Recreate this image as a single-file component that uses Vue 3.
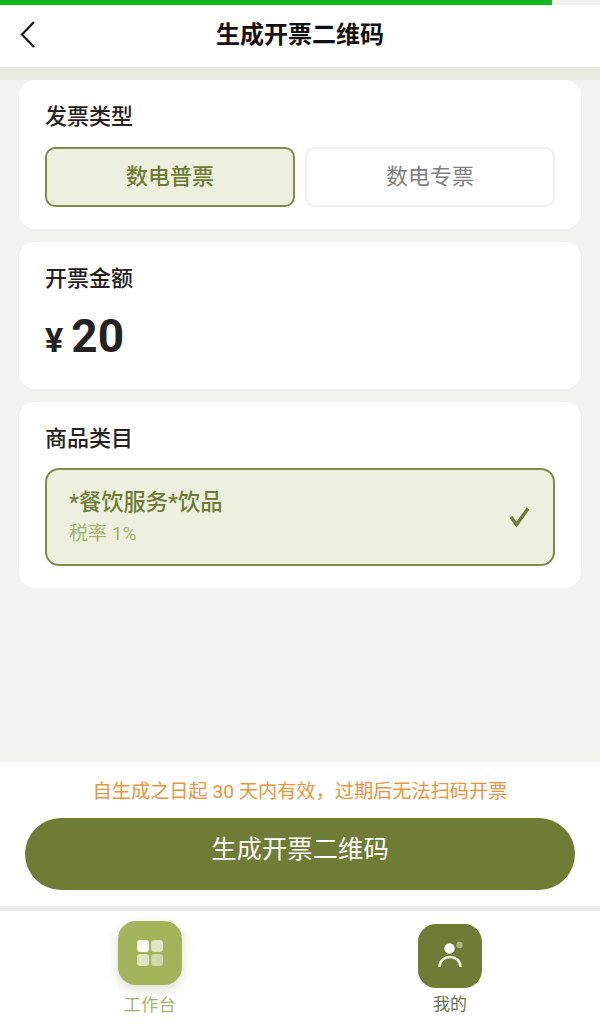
<script setup>
import { ref } from 'vue'

const tipi = ['数电普票', '数电专票']
const tipoScelto = ref('数电普票')
</script>

<template>
  <div class="pagina">
    <div class="progresso"></div>
    <header class="testata">
      <svg class="indietro" width="18" height="30" viewBox="0 0 18 30">
        <path d="M15 2 L3 14.5 L15 27" fill="none" stroke="#1a1a1a" stroke-width="2.2" />
      </svg>
      <h1>生成开票二维码</h1>
    </header>
    <div class="striscia"></div>

    <main class="contenuto">
      <section class="card card-tipo">
        <h2>发票类型</h2>
        <div class="tipi">
          <button
            v-for="tipo in tipi"
            :key="tipo"
            type="button"
            class="tipo"
            :class="{ attivo: tipo === tipoScelto }"
            @click="tipoScelto = tipo"
          >{{ tipo }}</button>
        </div>
      </section>

      <section class="card card-importo">
        <h2>开票金额</h2>
        <div class="importo"><span class="valuta">¥</span><span class="cifra">20</span></div>
      </section>

      <section class="card card-categoria">
        <h2>商品类目</h2>
        <div class="categoria">
          <div>
            <div class="categoria-nome">*餐饮服务*饮品</div>
            <div class="categoria-aliquota">税率 1%</div>
          </div>
          <svg width="22" height="22" viewBox="0 0 22 22">
            <path d="M3 11 L8.5 18.5 L20 2.5" fill="none" stroke="#6e7c35" stroke-width="3.4" />
          </svg>
        </div>
      </section>
    </main>

    <footer class="piede">
      <p class="avviso">自生成之日起 30 天内有效，过期后无法扫码开票</p>
      <button type="button" class="genera">生成开票二维码</button>
    </footer>
    <div class="striscia-bassa"></div>

    <nav class="schede">
      <div class="scheda">
        <div class="icona icona-lavoro">
          <svg width="28" height="28" viewBox="0 0 26 26">
            <rect x="1" y="1" width="11" height="11" rx="3" fill="#ffffff" />
            <rect x="14" y="1" width="11" height="11" rx="3" fill="#dfe6c8" />
            <rect x="1" y="14" width="11" height="11" rx="3" fill="#dfe6c8" />
            <rect x="14" y="14" width="11" height="11" rx="3" fill="#cdd8ab" />
          </svg>
        </div>
        <span class="etichetta etichetta-lavoro">工作台</span>
      </div>
      <div class="scheda scheda-mio">
        <div class="icona icona-mio">
          <svg width="30" height="30" viewBox="0 0 30 30">
            <circle cx="14.5" cy="7.5" r="5.2" fill="#ffffff" />
            <circle cx="24.5" cy="4" r="3.2" fill="#a9b77d" />
            <path d="M4.5 26 C4.5 12.7 25.5 12.7 25.5 26" fill="none" stroke="#eef1e0" stroke-width="2.6" />
          </svg>
        </div>
        <span class="etichetta etichetta-mio">我的</span>
      </div>
    </nav>
  </div>
</template>

<style scoped>
.pagina {
  width: 600px;
  height: 1024px;
  display: flex;
  flex-direction: column;
  overflow: hidden;
  background: #f2f3ee;
  font-family: Roboto, "Noto Sans CJK SC", sans-serif;
}

.progresso {
  width: 552px;
  height: 5px;
  flex: none;
  background: #14b81e;
}

.testata {
  height: 62px;
  flex: none;
  box-sizing: border-box;
  padding-bottom: 2px;
  display: flex;
  align-items: center;
  justify-content: center;
  position: relative;
  background: #ffffff;
}

.indietro {
  position: absolute;
  left: 19px;
  top: 15px;
}

h1 {
  margin: 0;
  font-size: 24px;
  line-height: 34px;
  font-weight: 700;
  color: #111111;
}

.striscia {
  height: 13px;
  flex: none;
  background: #e9eae2;
}

.contenuto {
  flex: 1;
  display: flex;
  flex-direction: column;
  gap: 13px;
  padding: 0 19px;
}

.card {
  box-sizing: border-box;
  background: #ffffff;
  border-radius: 16px;
  padding: 21px 26px 0;
}

.card-tipo {
  height: 149px;
}

.card-importo {
  height: 147px;
}

.card-categoria {
  height: 186px;
}

h2 {
  margin: 0;
  font-size: 22px;
  line-height: 32px;
  font-weight: 500;
  color: #222222;
}

.tipi {
  display: flex;
  gap: 10px;
  margin-top: 14px;
}

.tipo {
  flex: 1;
  height: 60px;
  padding: 0 0 6px;
  border: 2px solid #f0f0f0;
  border-radius: 10px;
  background: #ffffff;
  font-family: inherit;
  font-size: 22px;
  color: #808080;
}

.tipo.attivo {
  border-color: #7f8b4f;
  background: #edf0df;
  color: #6e7c35;
  font-weight: 500;
}

.importo {
  display: flex;
  align-items: baseline;
  margin-top: 15px;
  color: #222222;
  font-weight: 700;
}

.valuta {
  font-size: 34px;
  margin-right: 8px;
}

.cifra {
  font-size: 46px;
  line-height: 52px;
}

.categoria {
  height: 98px;
  margin-top: 13px;
  box-sizing: border-box;
  display: flex;
  align-items: center;
  justify-content: space-between;
  padding: 0 23px 0 22px;
  border: 2px solid #7f8b4f;
  border-radius: 14px;
  background: #edf0df;
}

.categoria-nome {
  font-size: 22.3px;
  line-height: 30px;
  font-weight: 500;
  color: #6e7c35;
}

.categoria-aliquota {
  margin-top: 3px;
  font-size: 19px;
  line-height: 28px;
  color: #a3b46c;
}

.piede {
  height: 144px;
  flex: none;
  box-sizing: border-box;
  padding: 16px 25px 0;
  background: #ffffff;
}

.avviso {
  margin: 0;
  text-align: center;
  font-size: 19.2px;
  line-height: 28px;
  color: #e8953f;
}

.genera {
  display: block;
  width: 100%;
  height: 72px;
  margin-top: 12px;
  padding: 0 0 14px;
  border: none;
  border-radius: 36px;
  background: #6e7c35;
  font-family: inherit;
  font-size: 25.4px;
  color: #ffffff;
}

.striscia-bassa {
  height: 5px;
  flex: none;
  background: #ecece8;
}

.schede {
  height: 113px;
  flex: none;
  display: flex;
  background: #ffffff;
}

.scheda {
  width: 300px;
  display: flex;
  flex-direction: column;
  align-items: center;
  padding-top: 10px;
  box-sizing: border-box;
}

.scheda-mio {
  padding-top: 13px;
}

.icona {
  display: flex;
  align-items: center;
  justify-content: center;
  width: 64px;
  height: 64px;
  border-radius: 18px;
}

.icona-lavoro {
  background: #a3b55a;
  box-shadow: 0 4px 12px rgba(110, 124, 53, 0.25);
}

.icona-mio {
  background: #6e7c35;
}

.etichetta {
  font-size: 17px;
  line-height: 24px;
}

.etichetta-lavoro {
  margin-top: 8px;
  color: #a3b46c;
  letter-spacing: 0.5px;
}

.etichetta-mio {
  margin-top: 4px;
  color: #6b7150;
}
</style>
